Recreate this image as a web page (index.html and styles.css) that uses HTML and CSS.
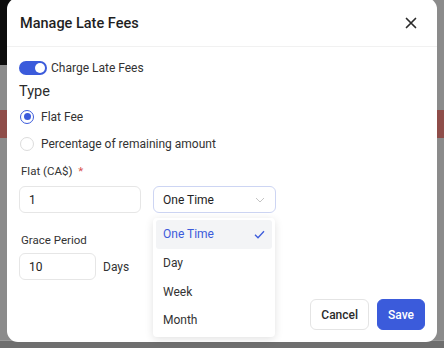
FILE: index.html
```html
<!DOCTYPE html>
<html lang="en">
<head>
  <meta charset="UTF-8" />
  <title>Manage Late Fees</title>
  <link rel="stylesheet" href="styles.css">
</head>
<body>
  <div class="backdrop">
    <div class="bg-top"></div>
    <div class="bg-band"></div>
  </div>

  <div class="modal">
    <div class="modal-header">
      <h2>Manage Late Fees</h2>
      <button class="close" aria-label="Close">
        <svg width="12" height="12" viewBox="0 0 12 12"><path d="M1.5 1.5l9 9M10.5 1.5l-9 9" stroke="#2b2b2b" stroke-width="1.7" stroke-linecap="round"/></svg>
      </button>
    </div>

    <div class="modal-body">
      <label class="switch-row">
        <span class="switch"><span class="knob"></span></span>
        Charge Late Fees
      </label>

      <div class="section-title">Type</div>

      <div class="radio-row first">
        <span class="radio checked"></span> Flat Fee
      </div>
      <div class="radio-row">
        <span class="radio"></span> Percentage of remaining amount
      </div>

      <div class="field-label">Flat (CA$) <span class="req">*</span></div>
      <div class="field-row">
        <div class="input wide">1</div>
        <div class="select-wrap">
          <div class="select">
            One Time
            <svg width="10" height="6" viewBox="0 0 10 6"><path d="M1 1l4 4 4-4" fill="none" stroke="#c4c4c4" stroke-width="1"/></svg>
          </div>
          <ul class="menu">
            <li class="active">One Time
              <svg width="11" height="9" viewBox="0 0 11 9"><path d="M1 4.8l3 3L10 1.2" fill="none" stroke="#3b5bdb" stroke-width="1.3"/></svg>
            </li>
            <li>Day</li>
            <li>Week</li>
            <li>Month</li>
          </ul>
        </div>
      </div>

      <div class="field-label grace">Grace Period</div>
      <div class="field-row tight">
        <div class="input short">10</div>
        <span class="unit">Days</span>
        <div class="input hidden-box"></div>
      </div>
    </div>

    <div class="modal-footer">
      <button class="btn">Cancel</button>
      <button class="btn primary">Save</button>
    </div>
  </div>
</body>
</html>
```

FILE: styles.css
```css
* {
  box-sizing: border-box;
}

body {
  margin: 0;
  width: 444px;
  height: 348px;
  overflow: hidden;
  font-family: Roboto, 'Noto Sans', sans-serif;
  color: #2b2b2b;
  background: #6f6f6f;
  position: relative;
}

.backdrop {
  height: 341px;
  background: #8b8b8b;
  border-bottom: 1px solid #9a9a9a;
}

.bg-top {
  width: 12px;
  height: 65px;
  background: #0c0c0c;
}

.bg-band {
  margin-top: 45px;
  height: 28px;
  background: #8e4d49;
}

.modal {
  position: absolute;
  left: 7px;
  top: -2px;
  width: 430px;
  height: 344px;
  background: #fff;
  border-radius: 11px;
}

.modal-header {
  height: 49px;
  padding: 2px 20px 0 13px;
  display: flex;
  align-items: center;
  justify-content: space-between;
  border-bottom: 1px solid #f1f1f1;
}

.modal-header h2 {
  margin: 0;
  font-size: 14.5px;
  font-weight: 500;
  color: #1f1f1f;
}

.close {
  border: none;
  background: none;
  padding: 0;
  display: flex;
}

.modal-body {
  padding: 13px 12px 0 12px;
}

.switch-row {
  display: flex;
  align-items: center;
  gap: 4px;
  font-size: 12px;
  color: #333;
  height: 16px;
}

.switch {
  width: 28px;
  height: 14px;
  border-radius: 7px;
  background: #3b5bdb;
  display: flex;
  justify-content: flex-end;
  padding: 2px;
}

.knob {
  width: 10px;
  height: 10px;
  border-radius: 50%;
  background: #fff;
}

.section-title {
  margin-top: 7px;
  font-size: 14.5px;
  font-weight: 400;
  color: #2b2b2b;
  height: 17px;
  line-height: 17px;
}

.radio-row {
  display: flex;
  align-items: center;
  gap: 7px;
  font-size: 12px;
  color: #333;
  height: 27px;
}

.radio-row.first {
  margin-top: 3px;
}

.radio {
  width: 14px;
  height: 14px;
  border-radius: 50%;
  border: 1px solid #dcdcdc;
  margin-left: 1px;
}

.radio.checked {
  border: 1.5px solid #3b5bdb;
  display: flex;
  align-items: center;
  justify-content: center;
}

.radio.checked::after {
  content: '';
  width: 7px;
  height: 7px;
  border-radius: 50%;
  background: #3b5bdb;
}

.field-label {
  margin-top: 7px;
  font-size: 11.5px;
  color: #333;
  padding-left: 2px;
  height: 15px;
  line-height: 15px;
}

.req {
  color: #d9534f;
  margin-left: 3px;
}

.field-row {
  display: flex;
  align-items: center;
  margin-top: 7px;
}

.field-row.tight {
  margin-top: 5px;
}

.input {
  height: 27px;
  border: 1px solid #e6e6e6;
  border-radius: 6px;
  padding: 0 9px;
  display: flex;
  align-items: center;
  font-size: 12px;
  color: #222;
}

.input.wide {
  width: 122px;
}

.input.short {
  width: 77px;
}

.unit {
  font-size: 12px;
  color: #333;
  margin-left: 7px;
}

.input.hidden-box {
  width: 20px;
  margin-left: 25px;
}

.select-wrap {
  position: relative;
  margin-left: 12px;
}

.select {
  width: 123px;
  height: 27px;
  border: 1.5px solid #cdd5f3;
  border-radius: 6px;
  padding: 0 10px 0 9px;
  display: flex;
  align-items: center;
  justify-content: space-between;
  font-size: 12px;
  color: #222;
}

.menu {
  position: absolute;
  top: 32px;
  left: 0;
  width: 122px;
  margin: 0;
  padding: 2px 3px;
  list-style: none;
  background: #fff;
  border-radius: 4px;
  box-shadow: 0 2px 8px rgba(0, 0, 0, 0.12);
  z-index: 10;
}

.menu li {
  height: 28.7px;
  display: flex;
  align-items: center;
  justify-content: space-between;
  padding: 0 7px 0 7px;
  font-size: 12px;
  color: #333;
  border-radius: 3px;
}

.menu li.active {
  background: #f3f4f6;
  color: #3b5bdb;
}

.grace {
  margin-top: 20px;
}

.modal-footer {
  position: absolute;
  right: 12px;
  bottom: 12px;
  display: flex;
  gap: 8px;
}

.btn {
  height: 31px;
  padding: 0 10px;
  border: 1px solid #e4e4e4;
  border-radius: 6px;
  background: #fff;
  font-family: Roboto, 'Noto Sans', sans-serif;
  font-size: 12px;
  font-weight: 500;
  color: #2b2b2b;
}

.btn.primary {
  background: #3b5bdb;
  border-color: #3b5bdb;
  color: #fff;
  padding: 0 10px;
}
```
